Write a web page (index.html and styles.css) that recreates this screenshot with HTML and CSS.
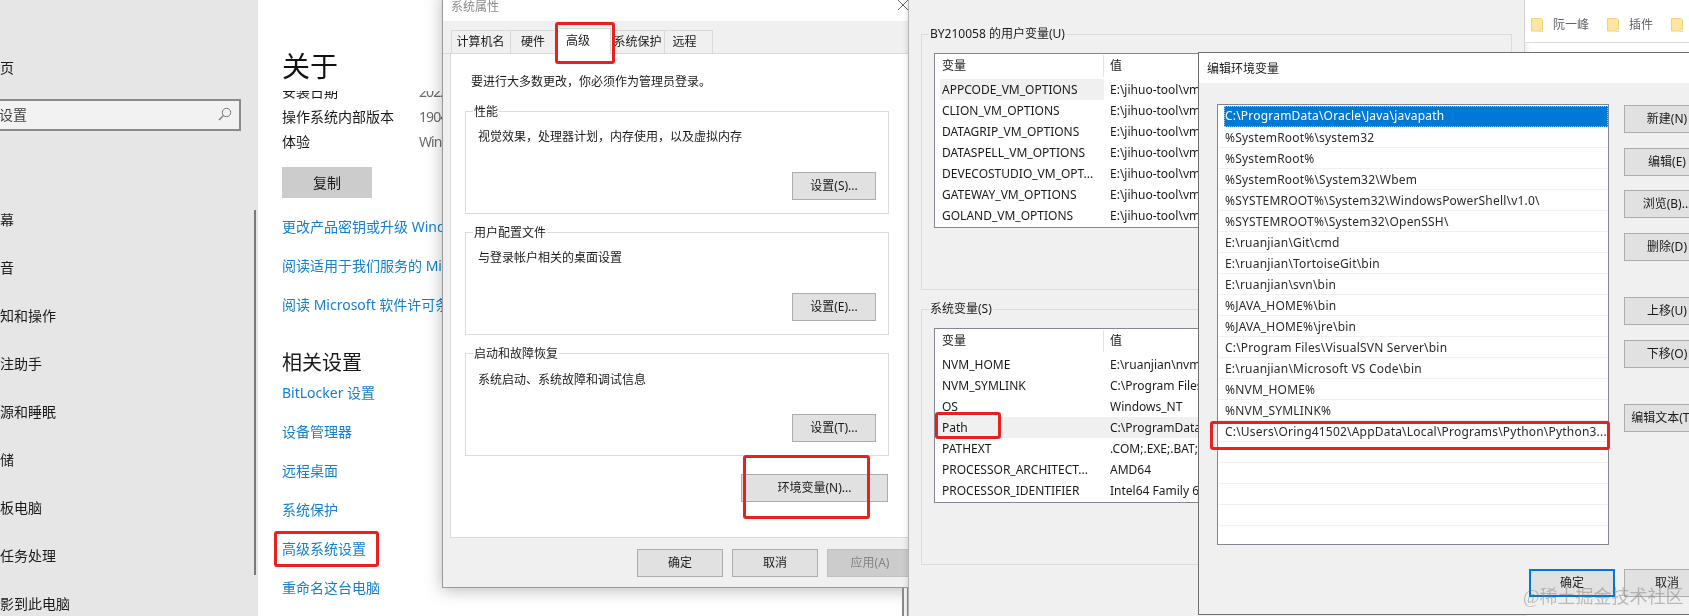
FILE: index.html
```html
<!DOCTYPE html>
<html lang="zh-CN">
<head>
<meta charset="utf-8">
<title>系统属性 - 环境变量</title>
<link rel="stylesheet" href="styles.css">
</head>
<body>
<div class="desktop">

  <section class="settings">
    <aside class="sidebar">
      <div class="side-item side-home">主页</div>
      <div class="search"><span class="search-text">查找设置</span>
        <svg class="search-icon" width="14" height="14" viewBox="0 0 14 14"><circle cx="8.500" cy="5.500" r="4.200" fill="none" stroke="#777" stroke-width="1"/><path d="M5.500 8.500 1 13" stroke="#777" stroke-width="1.200" fill="none"/></svg>
      </div>
      <nav class="side-list">
        <div class="side-item">屏幕</div>
        <div class="side-item">声音</div>
        <div class="side-item">通知和操作</div>
        <div class="side-item">专注助手</div>
        <div class="side-item">电源和睡眠</div>
        <div class="side-item">存储</div>
        <div class="side-item">平板电脑</div>
        <div class="side-item">多任务处理</div>
        <div class="side-item">投影到此电脑</div>
      </nav>
      <div class="side-scroll"></div>
    </aside>
    <main class="about">
      <h1 class="about-title">关于</h1>
      <div class="spec-clip">
        <div class="spec-row spec-first"><span>安装日期</span><span class="spec-val">2022/3/14</span></div>
        <div class="spec-row"><span>操作系统内部版本</span><span class="spec-val">19044.1586</span></div>
        <div class="spec-row"><span>体验</span><span class="spec-val">Windows Feature</span></div>
      </div>
      <div class="copy-btn">复制</div>
      <div class="links">
        <a class="link">更改产品密钥或升级 Windows</a>
        <a class="link">阅读适用于我们服务的 Microsoft</a>
        <a class="link">阅读 Microsoft 软件许可条款</a>
      </div>
      <h2 class="about-sub">相关设置</h2>
      <div class="links">
        <a class="link">BitLocker 设置</a>
        <a class="link">设备管理器</a>
        <a class="link">远程桌面</a>
        <a class="link">系统保护</a>
        <a class="link">高级系统设置</a>
        <a class="link">重命名这台电脑</a>
      </div>
    </main>
  </section>

  <section class="sysprops">
    <header class="sys-title"><span>系统属性</span>
      <svg class="sys-close" width="10" height="10" viewBox="0 0 10 10"><path d="M0 0 10 10M10 0 0 10" stroke="#666" stroke-width="1" fill="none"/></svg>
    </header>
    <div class="tabs">
      <div class="tab tab-a">计算机名</div>
      <div class="tab tab-b">硬件</div>
      <div class="tab tab-on">高级</div>
      <div class="tab tab-c">系统保护</div>
      <div class="tab tab-d">远程</div>
    </div>
    <div class="panel">
      <p class="panel-note">要进行大多数更改，你必须作为管理员登录。</p>
      <div class="pgroup pgroup-first">
        <span class="legend">性能</span>
        <p class="pgroup-text">视觉效果，处理器计划，内存使用，以及虚拟内存</p>
        <div class="btn pgroup-btn">设置(S)...</div>
      </div>
      <div class="pgroup">
        <span class="legend">用户配置文件</span>
        <p class="pgroup-text">与登录帐户相关的桌面设置</p>
        <div class="btn pgroup-btn">设置(E)...</div>
      </div>
      <div class="pgroup pgroup-last">
        <span class="legend">启动和故障恢复</span>
        <p class="pgroup-text">系统启动、系统故障和调试信息</p>
        <div class="btn pgroup-btn">设置(T)...</div>
      </div>
      <div class="btn env-btn">环境变量(N)...</div>
    </div>
    <div class="sys-foot">
      <div class="btn">确定</div>
      <div class="btn">取消</div>
      <div class="btn btn-off">应用(A)</div>
    </div>
  </section>
  <div class="back-edge"></div>

  <section class="envvars">
    <div class="vgroup">
      <span class="legend">BY210058 的用户变量(U)</span>
      <div class="vtable">
        <div class="vhead"><span>变量</span><span class="vhead-val">值</span></div>
        <div class="vrow vrow-hl1"><span class="vname">APPCODE_VM_OPTIONS</span><span class="vval">E:\jihuo-tool\vmoptions</span></div>
        <div class="vrow"><span class="vname">CLION_VM_OPTIONS</span><span class="vval">E:\jihuo-tool\vmoptions</span></div>
        <div class="vrow"><span class="vname">DATAGRIP_VM_OPTIONS</span><span class="vval">E:\jihuo-tool\vmoptions</span></div>
        <div class="vrow"><span class="vname">DATASPELL_VM_OPTIONS</span><span class="vval">E:\jihuo-tool\vmoptions</span></div>
        <div class="vrow"><span class="vname">DEVECOSTUDIO_VM_OPT...</span><span class="vval">E:\jihuo-tool\vmoptions</span></div>
        <div class="vrow"><span class="vname">GATEWAY_VM_OPTIONS</span><span class="vval">E:\jihuo-tool\vmoptions</span></div>
        <div class="vrow"><span class="vname">GOLAND_VM_OPTIONS</span><span class="vval">E:\jihuo-tool\vmoptions</span></div>
      </div>
    </div>
    <div class="vgroup">
      <span class="legend">系统变量(S)</span>
      <div class="vtable">
        <div class="vhead"><span>变量</span><span class="vhead-val">值</span></div>
        <div class="vrow"><span class="vname">NVM_HOME</span><span class="vval">E:\ruanjian\nvm</span></div>
        <div class="vrow"><span class="vname">NVM_SYMLINK</span><span class="vval">C:\Program Files\nodejs</span></div>
        <div class="vrow"><span class="vname">OS</span><span class="vval">Windows_NT</span></div>
        <div class="vrow vrow-hl2"><span class="vname">Path</span><span class="vval">C:\ProgramData\Oracle</span></div>
        <div class="vrow"><span class="vname">PATHEXT</span><span class="vval">.COM;.EXE;.BAT;.CMD</span></div>
        <div class="vrow"><span class="vname">PROCESSOR_ARCHITECT...</span><span class="vval">AMD64</span></div>
        <div class="vrow"><span class="vname">PROCESSOR_IDENTIFIER</span><span class="vval">Intel64 Family 6 Model</span></div>
      </div>
    </div>
  </section>

  <div class="bookmarks">
    <svg class="folder" width="12" height="14" viewBox="0 0 12 14"><path d="M.5.5h9.500l1.500 1.500v11h-11z" fill="#fbe79f" stroke="#efd27a"/><path d="M9 11h2.500v2.500H9z" fill="#fff6d8" stroke="#efd27a" stroke-width=".7"/></svg>
    <span class="bm-text bm-a">阮一峰</span>
    <svg class="folder" width="12" height="14" viewBox="0 0 12 14"><path d="M.5.5h9.500l1.500 1.500v11h-11z" fill="#fbe79f" stroke="#efd27a"/><path d="M9 11h2.500v2.500H9z" fill="#fff6d8" stroke="#efd27a" stroke-width=".7"/></svg>
    <span class="bm-text bm-b">插件</span>
    <svg class="folder" width="12" height="14" viewBox="0 0 12 14"><path d="M.5.5h9.500l1.500 1.500v11h-11z" fill="#fbe79f" stroke="#efd27a"/><path d="M9 11h2.500v2.500H9z" fill="#fff6d8" stroke="#efd27a" stroke-width=".7"/></svg>
  </div>

  <section class="editenv">
    <header class="edit-title">编辑环境变量</header>
    <div class="edit-body">
      <div class="edit-main">
        <div class="plist">
          <div class="pitem pitem-on"><span>C:\ProgramData\Oracle\Java\javapath</span></div>
          <div class="pitem">%SystemRoot%\system32</div>
          <div class="pitem">%SystemRoot%</div>
          <div class="pitem">%SystemRoot%\System32\Wbem</div>
          <div class="pitem">%SYSTEMROOT%\System32\WindowsPowerShell\v1.0\</div>
          <div class="pitem">%SYSTEMROOT%\System32\OpenSSH\</div>
          <div class="pitem">E:\ruanjian\Git\cmd</div>
          <div class="pitem">E:\ruanjian\TortoiseGit\bin</div>
          <div class="pitem">E:\ruanjian\svn\bin</div>
          <div class="pitem">%JAVA_HOME%\bin</div>
          <div class="pitem">%JAVA_HOME%\jre\bin</div>
          <div class="pitem">C:\Program Files\VisualSVN Server\bin</div>
          <div class="pitem">E:\ruanjian\Microsoft VS Code\bin</div>
          <div class="pitem">%NVM_HOME%</div>
          <div class="pitem">%NVM_SYMLINK%</div>
          <div class="pitem">C:\Users\Oring41502\AppData\Local\Programs\Python\Python3...</div>
          <div class="pitem"></div>
          <div class="pitem"></div>
          <div class="pitem"></div>
          <div class="pitem"></div>
        </div>
        <div class="edit-btns">
          <div class="btn">新建(N)</div>
          <div class="btn">编辑(E)</div>
          <div class="btn">浏览(B)...</div>
          <div class="btn">删除(D)</div>
          <div class="btn btn-gap">上移(U)</div>
          <div class="btn">下移(O)</div>
          <div class="btn btn-gap">编辑文本(T)...</div>
        </div>
      </div>
      <div class="edit-foot">
        <div class="btn btn-default">确定</div>
        <div class="btn">取消</div>
      </div>
    </div>
  </section>

  <div class="mark mark-adv"></div>
  <div class="mark mark-tab"></div>
  <div class="mark mark-env"></div>
  <div class="mark mark-path"></div>
  <div class="mark mark-py"></div>
  <div class="watermark">@稀土掘金技术社区</div>
</div>
</body>
</html>
```

FILE: styles.css
```css
* { box-sizing: border-box; }
html, body { margin: 0; padding: 0; background: #fff; }
body { font-family: "Noto Sans", "Noto Sans CJK SC", sans-serif; font-size: 12px; color: #1a1a1a; }
p, h1, h2 { margin: 0; font-weight: 400; }

.desktop { position: relative; width: 1689px; height: 616px; overflow: hidden; background: #fff; filter: blur(.3px); }

/* settings window (free canvas) */
.settings { position: absolute; left: 0; top: 0; width: 450px; height: 616px; display: flex; background: #fff; }
.sidebar { position: relative; width: 258px; height: 616px; flex: none; background: #e6e6e6; overflow: hidden; }
.side-item { height: 48px; line-height: 51px; font-size: 14px; margin-left: -14px; white-space: nowrap; color: #1a1a1a; }
.side-home { margin-top: 43px; line-height: 50px; }
.search { display: flex; align-items: center; justify-content: space-between; height: 32px; width: 242px; margin: 8px 0 0 -1px; background: #f2f2f2; border: 2px solid #8a8a8a; border-left: 0; padding: 0 7px 2px 0; font-size: 14px; color: #444; }
.search-text { margin-left: -28px; white-space: nowrap; }
.search-icon { flex: none; }
.side-list { margin-top: 63px; }
.side-scroll { position: absolute; left: 254px; top: 210px; width: 2px; height: 365px; background: #7a7a7a; }

.about { flex: 1; min-width: 0; padding: 46px 0 0 24px; font-size: 14px; overflow: hidden; color: #1a1a1a; }
.about-title { font-size: 28px; line-height: 40px; height: 40px; margin-bottom: 5px; color: #111; }
.spec-clip { height: 63px; overflow: hidden; }
.spec-row { display: grid; grid-template-columns: 137px 1fr; height: 25px; line-height: 25px; white-space: nowrap; }
.spec-first { margin-top: -12px; }
.spec-val { color: #6b6b6b; letter-spacing: -.9px; }
.copy-btn { width: 90px; height: 31px; line-height: 31px; margin-top: 13px; text-align: center; background: #ccc; }
.links { display: flex; flex-direction: column; margin-top: 9px; }
.link { height: 39px; line-height: 39px; color: #1480cf; white-space: nowrap; }
.about-sub { font-size: 20px; line-height: 20px; height: 20px; margin-top: 29px; color: #1a1a1a; }
.about-sub + .links { margin-top: 0; }

/* system properties dialog */
.sysprops { position: absolute; left: 442px; top: -9px; width: 478px; height: 597px; display: flex; flex-direction: column; background: #f0f0f0; border-left: 1px solid #9a9a9a; border-bottom: 1px solid #9a9a9a; box-shadow: 0 2px 16px rgba(0,0,0,.28); }
.sys-title { position: relative; height: 30px; flex: none; background: #fff; padding-left: 8px; line-height: 31px; color: #8a8a8a; }
.sys-close { position: absolute; left: 455px; top: 9px; }
.tabs { display: flex; align-items: flex-end; height: 33px; padding-left: 8px; flex: none; border-bottom: 1px solid #d9d9d9; }
.tab { height: 23px; line-height: 22px; text-align: center; background: #f0f0f0; border: 1px solid #d9d9d9; border-bottom: 0; border-left-width: 0; }
.tab-a { width: 60px; border-left-width: 1px; padding-right: 1px; }
.tab-b { width: 45px; }
.tab-on { position: relative; width: 55px; height: 26px; margin-bottom: -1px; padding-right: 10px; line-height: 24px; background: #fff; }
.tab-c { width: 54px; }
.tab-d { width: 48px; padding-right: 8px; }
.panel { position: relative; height: 484px; flex: none; margin-left: 7px; background: #fff; border-left: 1px solid #d9d9d9; border-bottom: 1px solid #d9d9d9; padding: 19px 0 0 14px; }
.panel-note { line-height: 18px; margin-left: 6px; }
.pgroup { position: relative; width: 424px; height: 103px; margin-top: 18px; border: 1px solid #dcdcdc; padding: 16px 0 0 12px; }
.pgroup-first { margin-top: 20px; }
.pgroup-last { padding-top: 17px; }
.legend { position: absolute; left: 7px; top: -8px; line-height: 16px; padding: 0 1px; background: inherit; white-space: nowrap; }
.pgroup .legend { background: #fff; }
.pgroup-text { line-height: 18px; }
.btn { width: 86px; height: 28px; line-height: 26px; flex: none; text-align: center; background: #e1e1e1; border: 1px solid #adadad; white-space: nowrap; color: #1a1a1a; }
.pgroup-btn { position: absolute; right: 12px; bottom: 13px; width: 84px; }
.env-btn { position: absolute; left: 290px; top: 420px; width: 147px; }
.sys-foot { display: flex; gap: 9px; padding: 11px 0 0 194px; }
.btn-off { background: #ccc; border-color: #bfbfbf; color: #838383; }
.back-edge { position: absolute; left: 902px; top: 588px; width: 7px; height: 28px; border-left: 2px solid #8a8a8a; border-right: 2px solid #8a8a8a; background: #f4f4f4; }

/* environment variables dialog */
.envvars { position: absolute; left: 908px; top: 0; width: 617px; height: 616px; background: #f0f0f0; border-left: 1px solid #b4b4b4; border-right: 1px solid #d4d4d4; padding: 34px 0 0 12px; box-shadow: 0 0 6px rgba(0,0,0,.15); }
.vgroup { position: relative; width: 591px; height: 256px; margin-bottom: 19px; border: 1px solid #dcdcdc; padding: 18px 0 0 12px; }
.vgroup .legend { background: #f0f0f0; top: -9px; left: 7px; }
.vtable { height: 175px; width: 570px; background: #fff; border: 1px solid #828790; overflow: hidden; }
.vhead { display: grid; grid-template-columns: 168px 1fr; height: 25px; line-height: 24px; padding-left: 7px; }
.vhead-val { border-left: 1px solid #e5e5e5; height: 22px; margin-top: 1px; line-height: 22px; padding-left: 6px; margin-left: -7px; }
.vrow { display: grid; grid-template-columns: 168px 1fr; height: 21px; line-height: 21px; padding-left: 7px; white-space: nowrap; }
.vname { overflow: hidden; }
.vval { overflow: hidden; }
.vrow-hl1 { background: linear-gradient(to right, #fff 5px, #f0f0f0 5px, #f0f0f0 169px, #fff 169px); }
.vrow-hl2 { background: #f0f0f0; }

/* bookmarks bar behind the edit dialog */
.bookmarks { position: absolute; left: 1525px; top: 0; width: 164px; height: 43px; display: flex; align-items: center; padding: 8px 0 0 6px; background: #fff; border-bottom: 1px solid #dcdcdc; }
.folder { flex: none; }
.bm-text { line-height: 16px; color: #5f6368; }
.bm-a { margin: 0 18px 0 10px; }
.bm-b { margin: 0 18px 0 10px; }

/* edit environment variable dialog */
.editenv { position: absolute; left: 1198px; top: 52px; width: 520px; height: 563px; display: flex; flex-direction: column; background: #f0f0f0; border-top: 1px solid #6e6e6e; border-left: 1px solid #6e6e6e; border-bottom: 1px solid #6e6e6e; }
.edit-title { height: 30px; flex: none; background: #fff; padding-left: 8px; line-height: 31px; }
.edit-body { flex: 1; padding: 21px 0 0 18px; }
.edit-main { display: flex; align-items: flex-start; gap: 15px; }
.plist { width: 392px; height: 441px; flex: none; background: #fff; border: 1px solid #828790; padding: 1px 0 0 1px; overflow: hidden; }
.pitem { height: 21px; line-height: 22px; padding-left: 6px; border-bottom: 1px solid #f0f0f0; white-space: nowrap; letter-spacing: .2px; color: #2a2a2a; }
.pitem-on { margin-left: 5px; padding-left: 1px; line-height: 20px; color: #fff; background: #0078d7; border: 0; outline: 1px dotted #9cc8ee; outline-offset: -1px; }
.edit-btns { display: flex; flex-direction: column; gap: 14.67px; padding-top: 1px; }
.btn-gap { margin-top: 21.33px; }
.edit-foot { display: flex; gap: 9px; margin: 24px 0 0 312px; }
.btn-default { border: 2px solid #0078d7; line-height: 24px; }

/* red annotation boxes */
.mark { position: absolute; border: 3px solid #e9201e; border-radius: 3px; }
.mark-adv { left: 274px; top: 531px; width: 105px; height: 36px; }
.mark-tab { left: 555px; top: 22px; width: 60px; height: 42px; }
.mark-env { left: 743px; top: 455px; width: 127px; height: 64px; }
.mark-path { left: 935px; top: 412px; width: 66px; height: 27px; }
.mark-py { left: 1210px; top: 421px; width: 400px; height: 29px; }

.watermark { position: absolute; left: 1523px; top: 584px; font-family: "Liberation Serif", "Noto Sans CJK SC", serif; font-size: 18px; line-height: 26px; color: rgba(120,120,120,.45); white-space: nowrap; }
```
